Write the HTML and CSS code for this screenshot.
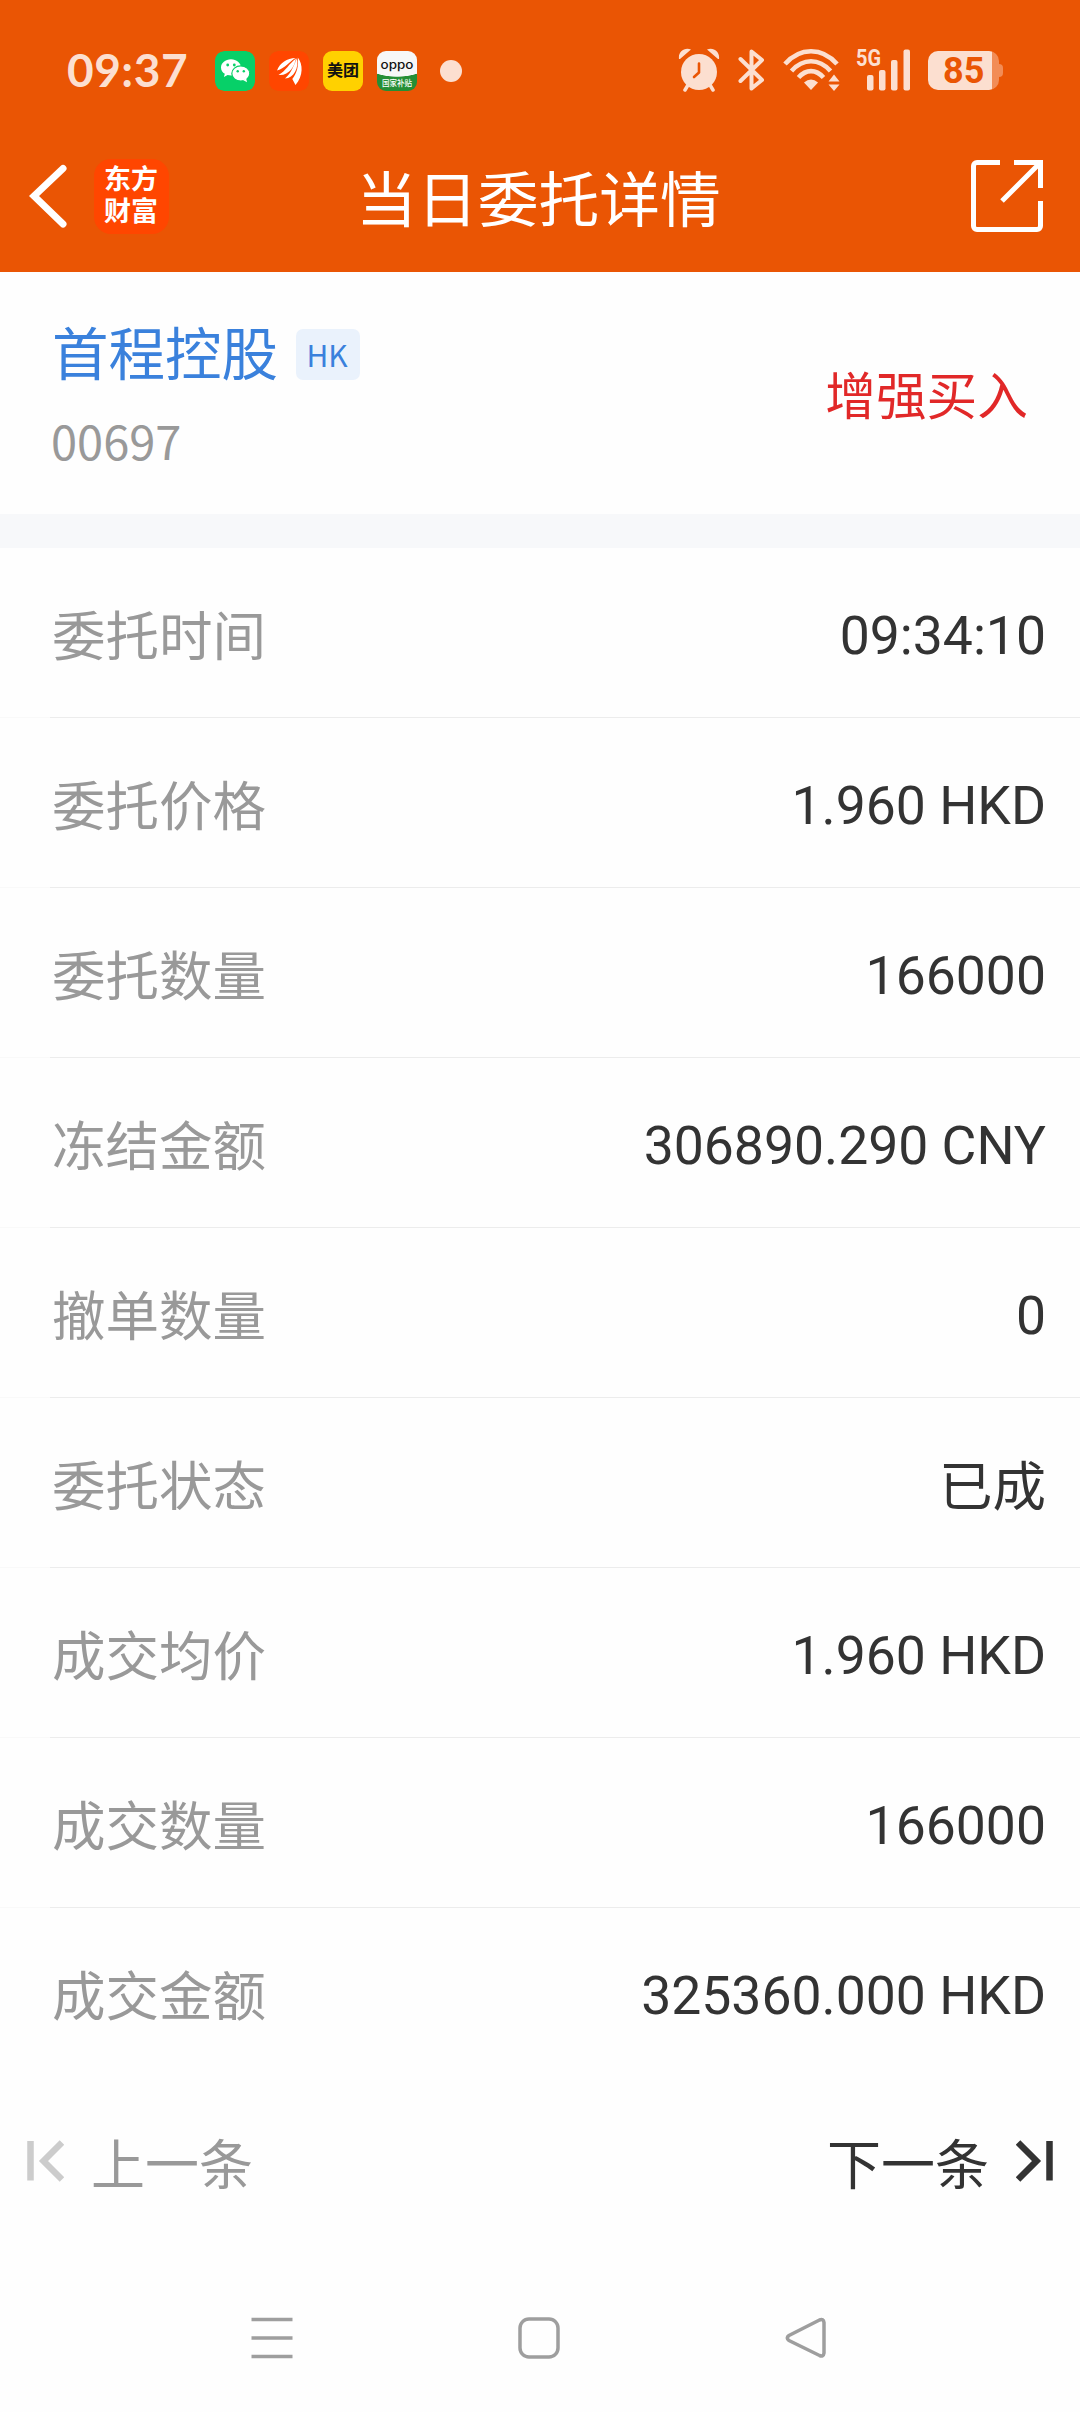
FILE: index.html
```html
<!DOCTYPE html>
<html lang="zh-CN">
<head>
    <meta charset="UTF-8">
    <meta name="viewport" content="width=device-width, initial-scale=1.0">
    <title>当日委托详情</title>
    <link rel="stylesheet" href="styles.css">
</head>
<body>

<header>
    <!-- 状态栏 -->
    <div class="status-bar">
        <div class="status-left">
            <span class="clock">09:37</span>
            <svg class="app" viewBox="0 0 40 40">
                <rect width="40" height="40" rx="9" fill="#07d068"/>
                <path d="M16 8.200c-5.600 0-10 3.700-10 8.200 0 2.700 1.500 4.900 3.800 6.400l-.9 3.300 3.700-2c1.100.3 2.200.5 3.400.5 5.500 0 10-3.700 10-8.200s-4.500-8.200-10-8.200z" fill="#fff"/>
                <ellipse cx="25.800" cy="22.500" rx="9" ry="7.600" fill="#fff" stroke="#07d068" stroke-width="1.200"/>
                <path d="M28 29l4 2.200-.8-3.800z" fill="#fff"/>
                <g fill="#07d068">
                    <circle cx="12.700" cy="14" r="1.400"/>
                    <circle cx="19.300" cy="14" r="1.400"/>
                    <circle cx="22.700" cy="20.300" r="1.200"/>
                    <circle cx="28.800" cy="20.300" r="1.200"/>
                </g>
            </svg>
            <svg class="app" viewBox="0 0 40 40">
                <rect width="40" height="40" rx="9" fill="#ff4600"/>
                <path d="M8 19.500C11 11.500 18 7.500 26.500 7C20 11 16.500 17 8 19.500zM9.500 24C17 20 20 12.500 27 7.500C25.500 15.500 20 25 9.500 24zM16 27.500C22.500 22 25 14 28 7C30 17 25 27 16 27.500zM28.800 6.500C34 13 34.500 25 26.500 34L23.300 28C28 22 29.700 15 28.800 6.500z" fill="#fff"/>
            </svg>
            <span class="app meituan">美团</span>
            <span class="app oppo"><b>oppo</b><i>国家补贴</i></span>
            <span class="dot"></span>
        </div>
        <div class="status-right">
            <svg class="alarm" width="42" height="44" viewBox="0 0 42 44">
                <circle cx="21" cy="24" r="18" fill="#fcdfd0"/>
                <path d="M10 37l-3 5M32 37l3 5" stroke="#fcdfd0" stroke-width="3.500" stroke-linecap="round"/>
                <path d="M1 11C0 4 6-1 13 1.500L2 11zM41 11C42 4 36-1 29 1.500L40 11z" fill="#fcdfd0"/>
                <path d="M21 15.500v9l-5 4.500" fill="none" stroke="#ea5504" stroke-width="2.600" stroke-linecap="round" stroke-linejoin="round"/>
            </svg>
            <svg class="bluetooth" width="28" height="44" viewBox="0 0 28 44">
                <path d="M2.500 11L24 32 13.500 40.500V3.500L24 12 2.500 33" fill="none" stroke="#fcdfd0" stroke-width="4" stroke-linejoin="round" stroke-linecap="round"/>
            </svg>
            <svg class="wifi" width="58" height="44" viewBox="0 0 58 44">
                <g fill="none" stroke="#fcdfd0" stroke-width="4.600">
                    <path d="M2 16C17 -1 39-1 54 16"/>
                    <path d="M8.500 23C20 10 36 10 47.500 23"/>
                    <path d="M15.500 29.500C23 21 33 21 40.500 29.500"/>
                </g>
                <path d="M21 34.500Q28 28.500 35 34.500L28 42z" fill="#fcdfd0"/>
                <path d="M45.500 33.500h11l-5.500-7zM45.500 36.500h11l-5.500 6.500z" fill="#fcdfd0"/>
            </svg>
            <svg class="signal" width="54" height="44" viewBox="0 0 54 44">
                <text x="0" y="18" textLength="25" lengthAdjust="spacingAndGlyphs">5G</text>
                <rect x="11" y="27" width="6.500" height="15.500" rx="2"/>
                <rect x="23" y="22" width="6.500" height="20.500" rx="2"/>
                <rect x="35" y="12" width="6.500" height="30.500" rx="2"/>
                <rect x="47.500" y="1.500" width="6.500" height="41" rx="2"/>
            </svg>
            <div class="battery"><span>85</span></div>
        </div>
    </div>

    <!-- 标题栏 -->
    <div class="title-bar">
        <div class="title-left">
            <svg width="38" height="64" viewBox="0 0 38 64">
                <path d="M34 4.500L5 32 34 60" fill="none" stroke="#fff" stroke-width="7" stroke-linecap="round" stroke-linejoin="miter"/>
            </svg>
            <div class="logo"><span>东方</span><span>财富</span></div>
        </div>
        <h1>当日委托详情</h1>
        <svg class="share" width="72" height="72" viewBox="0 0 72 72">
            <path d="M29 2.500H6a3.500 3.500 0 0 0-3.500 3.500v60a3.500 3.500 0 0 0 3.500 3.500h60a3.500 3.500 0 0 0 3.500-3.500V41M43 2.500h26.500V28M69 3L31 41" fill="none" stroke="#fff" stroke-width="5"/>
        </svg>
    </div>
</header>

<!-- 股票信息 -->
<section class="stock">
    <div>
        <div class="stock-name"><span class="name">首程控股</span><span class="market">HK</span></div>
        <div class="stock-code">00697</div>
    </div>
    <div class="direction">增强买入</div>
</section>

<!-- 委托明细 -->
<section class="details">
    <div class="row"><span class="label">委托时间</span><span class="value">09:34:10</span></div>
    <div class="row"><span class="label">委托价格</span><span class="value">1.960 HKD</span></div>
    <div class="row"><span class="label">委托数量</span><span class="value">166000</span></div>
    <div class="row"><span class="label">冻结金额</span><span class="value">306890.290 CNY</span></div>
    <div class="row"><span class="label">撤单数量</span><span class="value">0</span></div>
    <div class="row"><span class="label">委托状态</span><span class="value state">已成</span></div>
    <div class="row"><span class="label">成交均价</span><span class="value">1.960 HKD</span></div>
    <div class="row"><span class="label">成交数量</span><span class="value">166000</span></div>
    <div class="row"><span class="label">成交金额</span><span class="value">325360.000 HKD</span></div>
</section>

<!-- 翻页 -->
<div class="pager">
    <div class="prev">
        <svg width="38" height="42" viewBox="0 0 38 42">
            <path d="M4.500 1v39.500M36 2.500L17.500 21 36 39.500" fill="none" stroke="#ccc" stroke-width="6.500"/>
        </svg>
        <span>上一条</span>
    </div>
    <div class="next">
        <span>下一条</span>
        <svg width="38" height="42" viewBox="0 0 38 42">
            <path d="M33.500 1v39.500M2 2.500L20.500 21 2 39.500" fill="none" stroke="#333" stroke-width="6.500"/>
        </svg>
    </div>
</div>

<!-- 系统导航 -->
<nav>
    <svg width="42" height="42" viewBox="0 0 42 42">
        <path d="M.5 2.500h41M.5 21h41M.5 39.500h41"/>
    </svg>
    <svg width="42" height="42" viewBox="0 0 42 42">
        <rect x="2" y="2" width="38" height="38" rx="9"/>
    </svg>
    <svg width="42" height="42" viewBox="0 0 42 42">
        <path d="M34.500 3L4 18.500q-3.500 2.500 0 5L34.500 38.500q4 1.500 4.500-2.500V5.500q-.5-4-4.500-2.500z"/>
    </svg>
</nav>

</body>
</html>
```
FILE: styles.css
```css
* {
    box-sizing: border-box;
}

body {
    margin: 0;
    width: 1080px;
    height: 2412px;
    background-color: #fefefe;
    color: #333333;
    font-family: Roboto, "Noto Sans CJK SC", sans-serif;
    overflow: hidden;
}

svg {
    display: block;
    flex-shrink: 0;
}

header {
    height: 272px;
    background-color: #ea5504;
    color: #ffffff;
}

/* status bar */
.status-bar {
    display: flex;
    justify-content: space-between;
    height: 142px;
    padding: 0 77px 0 67px;
}

.status-left, .status-right {
    display: flex;
    align-items: center;
}

.status-right {
    padding-bottom: 2px;
}

.clock {
    width: 148px;
    color: #fcdfd0;
    font-family: Lato, sans-serif;
    font-size: 46px;
    font-weight: bold;
    letter-spacing: 0.5px;
    line-height: 46px;
    padding-bottom: 3px;
}

.app {
    width: 40px;
    height: 40px;
    margin-right: 14px;
    border-radius: 9px;
    overflow: hidden;
}

.meituan {
    background-color: #ffd100;
    color: #111111;
    font-size: 16px;
    font-weight: bold;
    line-height: 39px;
    text-align: center;
}

.oppo {
    display: flex;
    flex-direction: column;
    background: radial-gradient(ellipse 40px 22px at 50% 4px, #f7f7f7 97%, #258e35 100%);
    text-align: center;
}

.oppo b {
    height: 26px;
    color: #111111;
    font-family: Inter, sans-serif;
    font-size: 12px;
    font-weight: 500;
    line-height: 28px;
    transform: scaleX(1.12);
}

.oppo i {
    color: #ffffff;
    font-size: 7.5px;
    font-style: normal;
    font-weight: 500;
    line-height: 14px;
}

.dot {
    width: 22px;
    height: 22px;
    margin-left: 9px;
    border-radius: 50%;
    background-color: #fcdfd0;
}

.bluetooth {
    margin-left: 18px;
}

.wifi {
    margin-left: 17px;
}

.signal {
    margin-left: 15px;
    fill: #fcdfd0;
    font-family: Roboto, sans-serif;
    font-size: 24px;
    font-weight: bold;
    overflow: visible;
}

.battery {
    position: relative;
    width: 71px;
    height: 39px;
    margin-left: 18px;
    margin-right: 4px;
    border-radius: 10px;
    background: linear-gradient(to right, #fcdfd0 64px, #f28c56 64px);
    color: #ea5504;
    font-family: Roboto, sans-serif;
    font-size: 36px;
    font-weight: bold;
    line-height: 40px;
    padding-left: 15px;
}

.battery::after {
    content: "";
    position: absolute;
    right: -4px;
    top: 13px;
    width: 4px;
    height: 13px;
    border-radius: 0 4px 4px 0;
    background-color: #f28c56;
}

/* title bar */
.title-bar {
    display: grid;
    grid-template-columns: 1fr auto 1fr;
    align-items: center;
    height: 108px;
    padding: 0 37px 0 29px;
}

.title-left {
    display: flex;
    align-items: center;
    gap: 27px;
}

.logo {
    display: flex;
    flex-direction: column;
    gap: 5px;
    width: 75px;
    height: 75px;
    border-radius: 17px;
    background-color: #ff4600;
    font-family: "Noto Sans CJK SC", sans-serif;
    font-size: 27px;
    font-weight: bold;
    line-height: 27px;
    text-align: center;
    padding: 5px 1px 0 0;
}

h1 {
    margin: 11px 0 0 5px;
    font-size: 60.8px;
    font-weight: normal;
    line-height: 80px;
}

.share {
    justify-self: end;
}

/* stock */
.stock {
    display: flex;
    justify-content: space-between;
    height: 276px;
    padding: 46px 52px 0 52px;
    border-bottom: 34px solid #f7f8fa;
}

.stock-name {
    display: flex;
    align-items: center;
    height: 73px;
    color: #3a81dc;
    font-size: 56.5px;
}

.name {
    padding-bottom: 9px;
}

.market {
    width: 64px;
    height: 51px;
    margin-left: 18px;
    border-radius: 7px;
    background-color: #eaf2fc;
    font-family: "Noto Sans CJK SC", sans-serif;
    font-size: 30px;
    line-height: 50px;
    text-align: center;
    padding-right: 2px;
}

.stock-code {
    color: #999999;
    font-family: "Noto Sans CJK SC", sans-serif;
    font-size: 47px;
    line-height: 60px;
    margin-top: 19px;
    margin-left: -1px;
}

.direction {
    color: #e12828;
    font-size: 50.7px;
    line-height: 70px;
    margin-top: 45px;
}

/* order details */
.row {
    display: flex;
    justify-content: space-between;
    align-items: center;
    height: 170px;
    padding: 5px 34px 0 52px;
    border-bottom: 1px solid;
    border-image: linear-gradient(to right, #f9f9f9 51px, #ececec 51px) 1;
    font-size: 53.5px;
}

.row:last-child {
    border-bottom: none;
}

.label {
    color: #999999;
    padding-bottom: 6px;
}

.state {
    padding-bottom: 6px;
}

/* pager */
.pager {
    display: flex;
    justify-content: space-between;
    height: 168px;
    padding: 0 26px;
    font-size: 54px;
}

.prev, .next {
    display: flex;
    align-items: center;
}

.prev {
    gap: 27px;
    color: #999999;
}

.next {
    gap: 27px;
}

.pager svg {
    margin-bottom: 2px;
}

.pager span {
    margin-bottom: 2px;
}

/* navigation buttons */
nav {
    display: flex;
    justify-content: space-between;
    align-items: center;
    height: 166px;
    padding: 17px 253px 0 251px;
    fill: none;
    stroke: #9e9e9e;
    stroke-width: 3.500px;
}
```
